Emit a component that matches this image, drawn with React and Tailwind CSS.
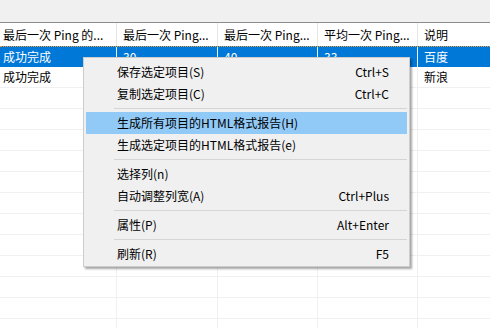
import React from "react";

const cols = [
  { w: "w-[117px]", pl: "pl-[3px]", title: "最后一次 Ping 的..." },
  { w: "w-[101px]", pl: "pl-[6px]", title: "最后一次 Ping..." },
  { w: "w-[100px]", pl: "pl-[6px]", title: "最后一次 Ping..." },
  { w: "w-[100px]", pl: "pl-[6px]", title: "平均一次 Ping..." },
  { w: "flex-1", pl: "pl-[6px]", title: "说明" },
];

const rows = [
  ["成功完成", "30", "40", "33", "百度"],
  ["成功完成", "", "", "", "新浪"],
];

const menu = [
  { label: "保存选定项目(S)", key: "Ctrl+S" },
  { label: "复制选定项目(C)", key: "Ctrl+C" },
  "sep",
  { label: "生成所有项目的HTML格式报告(H)", active: true },
  { label: "生成选定项目的HTML格式报告(e)" },
  "sep",
  { label: "选择列(n)" },
  { label: "自动调整列宽(A)", key: "Ctrl+Plus" },
  "sep",
  { label: "属性(P)", key: "Alt+Enter" },
  "sep",
  { label: "刷新(R)", key: "F5" },
];

function Row({ cells, selected }) {
  return (
    <div
      className={`flex h-[21px] shrink-0 ${
        selected
          ? "bg-[#0078d7] text-white border-t border-dotted border-[#f39c3a]"
          : "border-b border-[#f0f0f0] text-black"
      }`}
    >
      {cols.map((c, i) => (
        <div
          key={i}
          className={`${c.w} ${c.pl} flex items-center whitespace-nowrap overflow-hidden ${
            i < 4 ? (selected ? "border-r border-[#e8f2fb]" : "border-r border-[#f0f0f0]") : ""
          }`}
        >
          {cells[i]}
        </div>
      ))}
    </div>
  );
}

export default function App() {
  const empty = Array.from({ length: 12 });

  return (
    <div
      className="relative w-[490px] h-[328px] overflow-hidden bg-white text-[12px] leading-[16px] flex flex-col"
      style={{ fontFamily: '"Noto Sans CJK SC", "Noto Sans", sans-serif' }}
    >
      {/* toolbar band */}
      <div className="h-[23px] shrink-0 bg-[#f0f0f0] border-b border-[#8c8c8c]" />

      {/* header */}
      <div className="flex h-[23px] shrink-0 bg-white text-black">
        {cols.map((c, i) => (
          <div
            key={i}
            className={`${c.w} ${c.pl} flex items-center whitespace-nowrap overflow-hidden ${
              i < 4 ? "border-r border-[#e5e5e5]" : ""
            }`}
          >
            {c.title}
          </div>
        ))}
      </div>

      {/* rows */}
      <Row cells={rows[0]} selected />
      <Row cells={rows[1]} />
      {empty.map((_, i) => (
        <Row key={i} cells={[]} />
      ))}

      {/* context menu */}
      <div className="absolute left-[83px] top-[57px] w-[327px] bg-[#f0f0f0] border border-[#cccccc] pt-[3px] pb-[1px] shadow-[2px_2px_2px_rgba(0,0,0,0.35)] text-black">
        {menu.map((m, i) =>
          m === "sep" ? (
            <div key={i} className="h-[7px] pt-[3px] pl-[30px] pr-[2px]">
              <div className="h-px bg-[#d5d5d5]" />
            </div>
          ) : (
            <div
              key={i}
              className={`mx-[2px] h-[22px] pl-[31px] pr-[18px] flex items-center justify-between whitespace-nowrap ${
                m.active ? "bg-[#91c9f7]" : ""
              }`}
            >
              <span>{m.label}</span>
              {m.key && <span>{m.key}</span>}
            </div>
          )
        )}
      </div>
    </div>
  );
}
